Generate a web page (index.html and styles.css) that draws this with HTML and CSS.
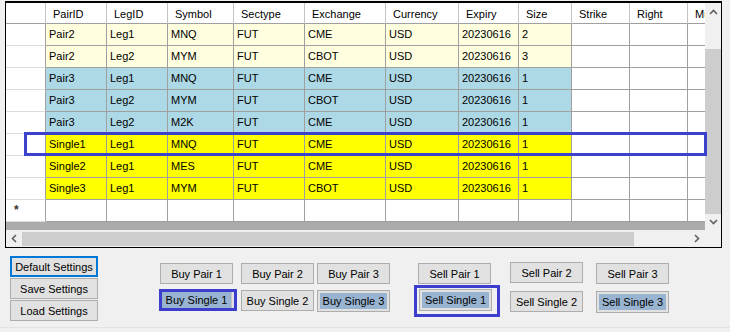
FILE: index.html
```html
<!DOCTYPE html>
<html>
<head>
    <title>Spread Orders</title>
    <link rel="stylesheet" href="styles.css">
</head>
<body>
    <div class="grid-frame">
        <div class="grid-top">
            <div class="grid-view">
                <div class="row head">
                    <div class="cell"></div>
                    <div class="cell">PairID</div>
                    <div class="cell">LegID</div>
                    <div class="cell">Symbol</div>
                    <div class="cell">Sectype</div>
                    <div class="cell">Exchange</div>
                    <div class="cell">Currency</div>
                    <div class="cell">Expiry</div>
                    <div class="cell">Size</div>
                    <div class="cell">Strike</div>
                    <div class="cell">Right</div>
                    <div class="cell">Multiplier</div>
                </div>
                <div class="row light-yellow">
                    <div class="cell"></div>
                    <div class="cell">Pair2</div>
                    <div class="cell">Leg1</div>
                    <div class="cell">MNQ</div>
                    <div class="cell">FUT</div>
                    <div class="cell">CME</div>
                    <div class="cell">USD</div>
                    <div class="cell">20230616</div>
                    <div class="cell">2</div>
                    <div class="cell"></div>
                    <div class="cell"></div>
                    <div class="cell"></div>
                </div>
                <div class="row light-yellow">
                    <div class="cell"></div>
                    <div class="cell">Pair2</div>
                    <div class="cell">Leg2</div>
                    <div class="cell">MYM</div>
                    <div class="cell">FUT</div>
                    <div class="cell">CBOT</div>
                    <div class="cell">USD</div>
                    <div class="cell">20230616</div>
                    <div class="cell">3</div>
                    <div class="cell"></div>
                    <div class="cell"></div>
                    <div class="cell"></div>
                </div>
                <div class="row light-blue">
                    <div class="cell"></div>
                    <div class="cell">Pair3</div>
                    <div class="cell">Leg1</div>
                    <div class="cell">MNQ</div>
                    <div class="cell">FUT</div>
                    <div class="cell">CME</div>
                    <div class="cell">USD</div>
                    <div class="cell">20230616</div>
                    <div class="cell">1</div>
                    <div class="cell"></div>
                    <div class="cell"></div>
                    <div class="cell"></div>
                </div>
                <div class="row light-blue">
                    <div class="cell"></div>
                    <div class="cell">Pair3</div>
                    <div class="cell">Leg2</div>
                    <div class="cell">MYM</div>
                    <div class="cell">FUT</div>
                    <div class="cell">CBOT</div>
                    <div class="cell">USD</div>
                    <div class="cell">20230616</div>
                    <div class="cell">1</div>
                    <div class="cell"></div>
                    <div class="cell"></div>
                    <div class="cell"></div>
                </div>
                <div class="row light-blue">
                    <div class="cell"></div>
                    <div class="cell">Pair3</div>
                    <div class="cell">Leg2</div>
                    <div class="cell">M2K</div>
                    <div class="cell">FUT</div>
                    <div class="cell">CME</div>
                    <div class="cell">USD</div>
                    <div class="cell">20230616</div>
                    <div class="cell">1</div>
                    <div class="cell"></div>
                    <div class="cell"></div>
                    <div class="cell"></div>
                </div>
                <div class="row yellow">
                    <div class="cell"></div>
                    <div class="cell">Single1</div>
                    <div class="cell">Leg1</div>
                    <div class="cell">MNQ</div>
                    <div class="cell">FUT</div>
                    <div class="cell">CME</div>
                    <div class="cell">USD</div>
                    <div class="cell">20230616</div>
                    <div class="cell">1</div>
                    <div class="cell"></div>
                    <div class="cell"></div>
                    <div class="cell"></div>
                </div>
                <div class="row yellow">
                    <div class="cell"></div>
                    <div class="cell">Single2</div>
                    <div class="cell">Leg1</div>
                    <div class="cell">MES</div>
                    <div class="cell">FUT</div>
                    <div class="cell">CME</div>
                    <div class="cell">USD</div>
                    <div class="cell">20230616</div>
                    <div class="cell">1</div>
                    <div class="cell"></div>
                    <div class="cell"></div>
                    <div class="cell"></div>
                </div>
                <div class="row yellow">
                    <div class="cell"></div>
                    <div class="cell">Single3</div>
                    <div class="cell">Leg1</div>
                    <div class="cell">MYM</div>
                    <div class="cell">FUT</div>
                    <div class="cell">CBOT</div>
                    <div class="cell">USD</div>
                    <div class="cell">20230616</div>
                    <div class="cell">1</div>
                    <div class="cell"></div>
                    <div class="cell"></div>
                    <div class="cell"></div>
                </div>
                <div class="row new-row">
                    <div class="cell">*</div>
                    <div class="cell"></div>
                    <div class="cell"></div>
                    <div class="cell"></div>
                    <div class="cell"></div>
                    <div class="cell"></div>
                    <div class="cell"></div>
                    <div class="cell"></div>
                    <div class="cell"></div>
                    <div class="cell"></div>
                    <div class="cell"></div>
                    <div class="cell"></div>
                </div>
            </div>
            <div class="vscroll">
                <div class="arrow-btn v-btn">
                    <svg width="9" height="6" viewBox="0 0 9 6"><polyline points="1,5 4.5,1.5 8,5" fill="none" stroke="#606060" stroke-width="1.6"/></svg>
                </div>
                <div class="v-track"><div class="v-thumb"></div></div>
                <div class="arrow-btn v-btn down">
                    <svg width="9" height="6" viewBox="0 0 9 6"><polyline points="1,1 4.5,4.5 8,1" fill="none" stroke="#606060" stroke-width="1.6"/></svg>
                </div>
            </div>
        </div>
        <div class="hscroll-row">
            <div class="hscroll">
                <div class="arrow-btn h-btn">
                    <svg width="6" height="9" viewBox="0 0 6 9"><polyline points="5,1 1.5,4.5 5,8" fill="none" stroke="#606060" stroke-width="1.6"/></svg>
                </div>
                <div class="h-track"><div class="h-thumb"></div></div>
                <div class="arrow-btn h-btn">
                    <svg width="6" height="9" viewBox="0 0 6 9"><polyline points="1,1 4.5,4.5 1,8" fill="none" stroke="#606060" stroke-width="1.6"/></svg>
                </div>
            </div>
            <div class="corner"></div>
        </div>
        <!-- blue box drawn over the Single1 row -->
        <div class="row-mark"></div>
    </div>

    <div class="panel">
        <div class="settings">
            <button class="btn wide default">Default Settings</button>
            <button class="btn wide">Save Settings</button>
            <button class="btn wide">Load Settings</button>
        </div>
        <div class="buy-grid">
            <button class="btn">Buy Pair 1</button>
            <button class="btn">Buy Pair 2</button>
            <button class="btn">Buy Pair 3</button>
            <button class="btn focused"><span>Buy Single 1</span></button>
            <button class="btn">Buy Single 2</button>
            <button class="btn picked"><span>Buy Single 3</span></button>
        </div>
        <div class="sell-grid">
            <button class="btn">Sell Pair 1</button>
            <button class="btn up">Sell Pair 2</button>
            <button class="btn">Sell Pair 3</button>
            <div class="focus-ring">
                <button class="btn picked"><span>Sell Single 1</span></button>
            </div>
            <button class="btn">Sell Single 2</button>
            <button class="btn picked"><span>Sell Single 3</span></button>
        </div>
    </div>
</body>
</html>
```

FILE: styles.css
```css
body {
    margin: 0;
    width: 730px;
    height: 332px;
    overflow: hidden;
    background-color: #f0f0f0;
    font-family: "Liberation Sans", Arial, sans-serif;
    font-size: 11px;
    color: #000;
}

.grid-frame {
    position: relative;
    margin: 1px 0 0 5px;
    width: 715px;
    border: 1px solid #000;
    border-top-width: 2px;
}

.grid-top {
    display: flex;
}

.grid-view {
    width: 699px;
    height: 227px;
    overflow: hidden;
    background-color: #ababab;
}

.row {
    display: grid;
    grid-template-columns: 40px 61px 61px 66px 71px 81px 73px 60px 53px 58px 58px 17px;
    height: 22px;
}

.cell {
    box-sizing: border-box;
    background-color: #fff;
    border-right: 1px solid #a0a0a0;
    border-bottom: 1px solid #a0a0a0;
    padding-left: 3px;
    line-height: 21px;
    white-space: nowrap;
    overflow: hidden;
}

.cell:first-child {
    border-bottom-color: #dcdcdc;
}

.cell:last-child {
    border-right: none;
}

.head {
    height: 21px;
}

.head .cell {
    padding: 3px 0 0 7px;
    line-height: 17px;
    border-right-color: #c4c4c4;
}

.head .cell:first-child {
    border-bottom-color: #a0a0a0;
}

.light-yellow .cell:nth-child(n+2):nth-child(-n+9) {
    background-color: #ffffe0;
}

.light-blue .cell:nth-child(n+2):nth-child(-n+9) {
    background-color: #add8e6;
}

.yellow .cell:nth-child(n+2):nth-child(-n+9) {
    background-color: #ffff00;
}

.new-row .cell:first-child {
    padding-left: 8px;
    color: #333;
    font-size: 12px;
    font-weight: bold;
}

.vscroll {
    display: flex;
    flex-direction: column;
    width: 16px;
    height: 227px;
    background-color: #f0f0f0;
}

.arrow-btn {
    display: flex;
    align-items: center;
    justify-content: center;
}

.v-btn {
    height: 17px;
}

.v-btn.down {
    height: 16px;
}

.v-track {
    flex: 1;
}

.v-thumb {
    margin-top: 29px;
    height: 165px;
    background-color: #cdcdcd;
}

.hscroll-row {
    display: flex;
    height: 17px;
}

.hscroll {
    display: flex;
    width: 699px;
    background-color: #f0f0f0;
}

.h-btn {
    width: 16px;
}

.h-track {
    flex: 1;
    padding: 2px 0 1px 0;
}

.h-thumb {
    width: 612px;
    height: 100%;
    background-color: #cdcdcd;
}

.corner {
    width: 16px;
    background-color: #f0f0f0;
}

.row-mark {
    position: absolute;
    left: 18px;
    top: 129px;
    width: 677px;
    height: 18px;
    border: 3px solid #3d42cd;
}

.panel {
    display: flex;
    align-items: flex-start;
    height: 79px;
    border-bottom: 1px solid #e2e2e2;
}

.btn {
    box-sizing: border-box;
    width: 73px;
    height: 21px;
    margin: 0;
    padding: 0;
    background-color: #e1e1e1;
    border: 1px solid #adadad;
    font-family: "Liberation Sans", Arial, sans-serif;
    font-size: 11px;
    color: #000;
    text-align: center;
    white-space: nowrap;
}

.settings {
    display: flex;
    flex-direction: column;
    gap: 1px;
    margin: 8px 0 0 10px;
}

.btn.wide {
    width: 88px;
}

.btn.default {
    border: 2px solid #0078d7;
}

.buy-grid {
    display: grid;
    grid-template-columns: 81px 76px 73px;
    grid-template-rows: 21px 21px;
    row-gap: 6px;
    margin: 15px 0 0 62px;
}

.sell-grid {
    display: grid;
    grid-template-columns: 92px 86px 73px;
    grid-template-rows: 21px 21px;
    row-gap: 7px;
    margin: 15px 0 0 28px;
}

.btn.up {
    margin-top: -1px;
}

.btn.picked {
    padding: 2px;
    height: 22px;
}

.btn span {
    display: block;
    height: 100%;
    line-height: 16px;
    background-color: #99b4d1;
}

.btn.focused {
    width: 78px;
    height: 22px;
    margin: -1px 0 0 -1px;
    padding: 0;
    border: 3px solid #3d3ecd;
}

.btn.focused span {
    margin-right: 2px;
    border-right: 1px solid #c4c4c4;
}

.focus-ring {
    justify-self: start;
    align-self: start;
    margin: -6px 0 -5px -4px;
    padding: 1px 5px 3px 2px;
    border: 3px solid #3d3ecd;
}

.focus-ring .btn {
    display: block;
}
```
